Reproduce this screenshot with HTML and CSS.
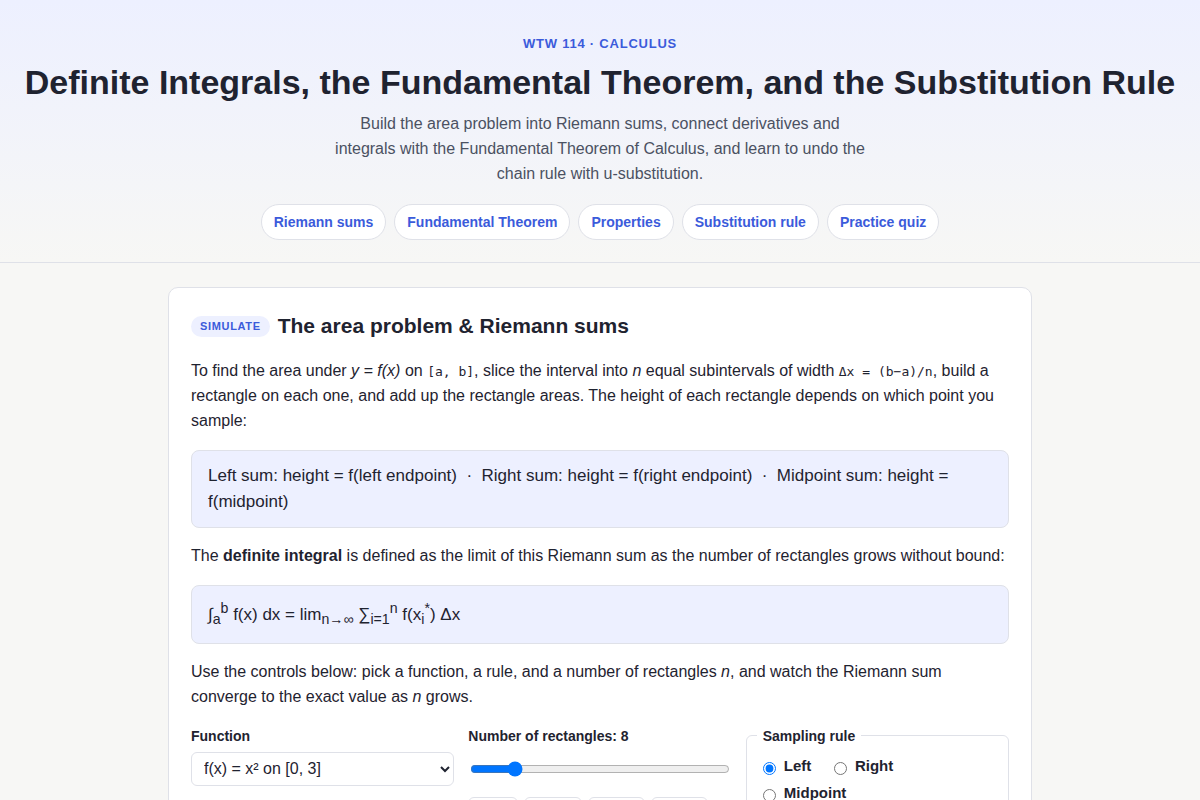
FILE: index.html
```html
<!DOCTYPE html>
<html lang="en">
<head>
    <meta charset="UTF-8">
    <meta name="viewport" content="width=device-width, initial-scale=1.0">
    <title>Definite Integrals, the Fundamental Theorem, and the Substitution Rule</title>
    <link rel="stylesheet" href="styles.css">
</head>
<body>
    <header class="hero">
        <p class="eyebrow">WTW 114 · Calculus</p>
        <h1>Definite Integrals, the Fundamental Theorem, and the Substitution Rule</h1>
        <p class="lead">Build the area problem into Riemann sums, connect derivatives and integrals with the Fundamental Theorem of Calculus, and learn to undo the chain rule with u-substitution.</p>
        <nav class="toc">
            <a href="#riemann">Riemann sums</a>
            <a href="#ftc">Fundamental Theorem</a>
            <a href="#properties">Properties</a>
            <a href="#substitution">Substitution rule</a>
            <a href="#quiz">Practice quiz</a>
        </nav>
    </header>

    <main>
        <section class="card" id="riemann">
            <h2><span class="tag">Simulate</span>The area problem &amp; Riemann sums</h2>
            <p>To find the area under <em>y = f(x)</em> on <code>[a, b]</code>, slice the interval into <em>n</em> equal subintervals of width <code>Δx = (b−a)/n</code>, build a rectangle on each one, and add up the rectangle areas. The height of each rectangle depends on which point you sample:</p>
            <div class="formula">Left sum: height = f(left endpoint) &nbsp;·&nbsp; Right sum: height = f(right endpoint) &nbsp;·&nbsp; Midpoint sum: height = f(midpoint)</div>
            <p>The <strong>definite integral</strong> is defined as the limit of this Riemann sum as the number of rectangles grows without bound:</p>
            <div class="formula">∫<sub>a</sub><sup>b</sup> f(x) dx = lim<sub>n→∞</sub> ∑<sub>i=1</sub><sup>n</sup> f(x<sub>i</sub><sup>*</sup>) Δx</div>
            <p>Use the controls below: pick a function, a rule, and a number of rectangles <em>n</em>, and watch the Riemann sum converge to the exact value as <em>n</em> grows.</p>

            <form class="controls">
                <div class="control">
                    <label for="fn">Function</label>
                    <select id="fn">
                        <option>f(x) = x² on [0, 3]</option>
                    </select>
                </div>
                <div class="control">
                    <label for="n">Number of rectangles: <output id="nValue">8</output></label>
                    <input type="range" id="n" min="1" max="48" value="8">
                    <div class="presets">
                        <button type="button">n = 4</button>
                        <button type="button">n = 10</button>
                        <button type="button">n = 20</button>
                        <button type="button">n = 40</button>
                    </div>
                </div>
                <fieldset>
                    <legend>Sampling rule</legend>
                    <label><input type="radio" name="rule" value="left" checked> Left</label>
                    <label><input type="radio" name="rule" value="right"> Right</label>
                    <label><input type="radio" name="rule" value="mid"> Midpoint</label>
                </fieldset>
            </form>
        </section>
    </main>

    <script>
        // keep the number in the label in step with the slider
        const slider = document.getElementById('n');
        slider.addEventListener('input', function() {
            document.getElementById('nValue').textContent = slider.value;
        });
    </script>
</body>
</html>
```
FILE: styles.css
```css
* {
    box-sizing: border-box;
}
body {
    margin: 0;
    background: #f7f7f5;
    color: #1f2330;
    font-family: "Liberation Sans", Arial, sans-serif;
    font-size: 16px;
    line-height: 1.55;
}
.hero {
    padding: 34px 24px 22px;
    text-align: center;
    background: linear-gradient(#edf0ff, #f7f7f5);
    border-bottom: 1px solid #dfe1e8;
}
.eyebrow {
    margin: 0 0 8px;
    color: #3b5bdb;
    font-size: 13px;
    font-weight: bold;
    letter-spacing: 0.06em;
    line-height: 20px;
    text-transform: uppercase;
}
h1 {
    margin: 0 0 10px;
    font-size: 34px;
    line-height: 40px;
}
.lead {
    max-width: 540px;
    margin: 0 auto 18px;
    color: #4b5162;
}
.toc {
    display: flex;
    flex-wrap: wrap;
    justify-content: center;
    gap: 8px;
}
.toc a {
    padding: 7px 12px;
    border: 1px solid #dfe1e8;
    border-radius: 999px;
    background: #fff;
    color: #3b5bdb;
    font-size: 14px;
    font-weight: bold;
    line-height: 20px;
    text-decoration: none;
}
main {
    max-width: 912px;
    margin: 0 auto;
    padding: 24px;
}
.card {
    padding: 22px;
    border: 1px solid #dfe1e8;
    border-radius: 10px;
    background: #fff;
}
h2 {
    display: flex;
    align-items: center;
    gap: 8px;
    margin: 0 0 17px;
    font-size: 21px;
    line-height: 32px;
}
.tag {
    padding: 2px 9px;
    border-radius: 999px;
    background: #edf0ff;
    color: #3b5bdb;
    font-size: 11px;
    letter-spacing: 0.06em;
    line-height: 17px;
    text-transform: uppercase;
}
.card p {
    margin: 0 0 16px;
}
code {
    font-family: "DejaVu Sans Mono", monospace;
    font-size: 13px;
}
.formula {
    margin: 0 0 16px;
    padding: 12px 16px;
    border: 1px solid #dfe1e8;
    border-radius: 8px;
    background: #edf0ff;
    font-size: 17px;
}
.controls {
    display: grid;
    grid-template-columns: repeat(3, 1fr);
    gap: 14px;
}
.control label,
legend {
    display: block;
    font-size: 14px;
    font-weight: bold;
    line-height: 20px;
}
.control label {
    margin-bottom: 6px;
}
select {
    width: 100%;
    height: 34px;
    padding: 0 8px;
    border: 1px solid #dfe1e8;
    border-radius: 6px;
    background: #fff;
    color: inherit;
    font: inherit;
}
input[type="range"] {
    display: block;
    width: calc(100% - 4px);
    height: 34px;
    margin: 0 2px;
}
.presets {
    display: flex;
    gap: 6px;
    margin-top: 11px;
}
.presets button {
    padding: 6px 9px;
    border: 1px solid #dfe1e8;
    border-radius: 6px;
    background: #fff;
    color: inherit;
    font: bold 13px "Liberation Sans", Arial, sans-serif;
}
fieldset {
    min-width: 0;
    margin: 0;
    padding: 6px 16px 12px;
    border: 1px solid #dfe1e8;
    border-radius: 6px;
}
legend {
    margin-left: -6px;
    padding: 0 6px;
}
fieldset label {
    display: inline-block;
    margin-right: 18px;
    font-size: 15px;
    font-weight: bold;
    line-height: 27px;
}
fieldset input {
    margin: 3px 4px 0 0;
    vertical-align: middle;
}
```
